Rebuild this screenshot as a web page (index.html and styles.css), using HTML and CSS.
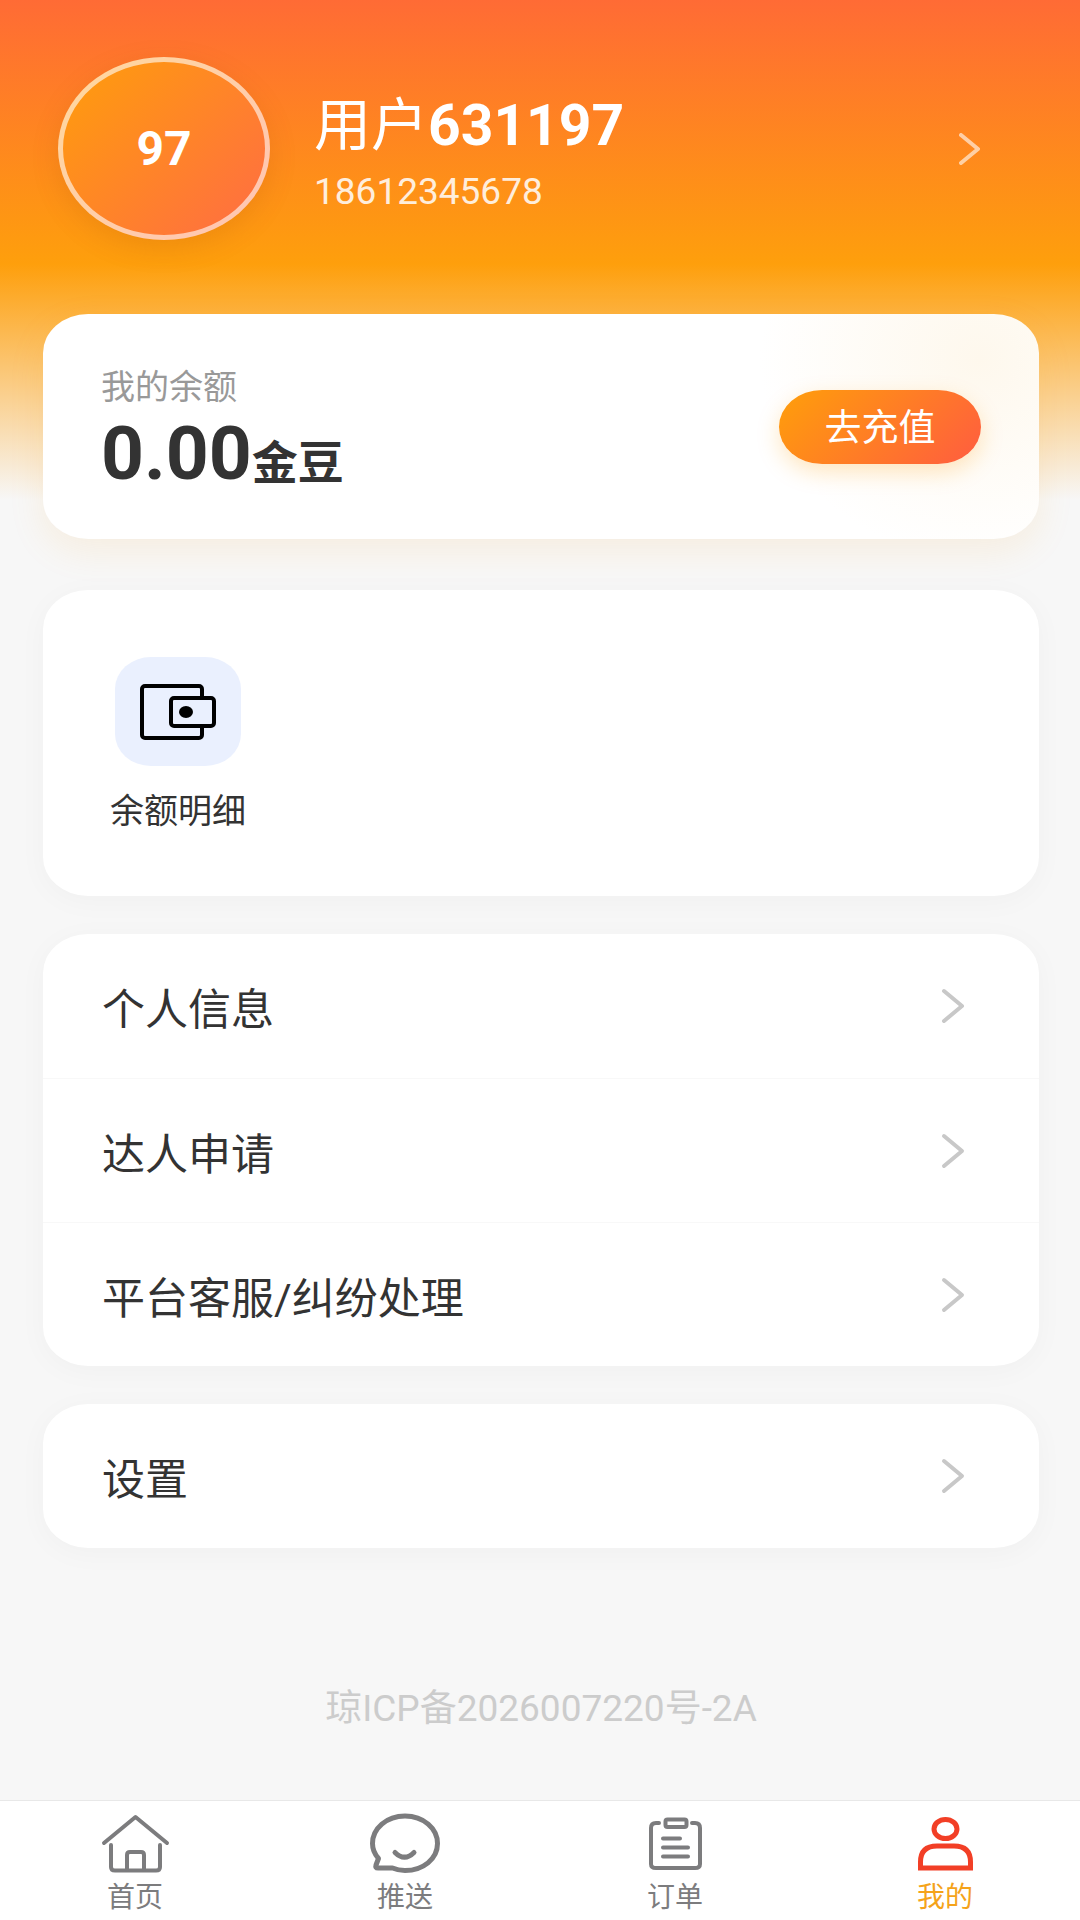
FILE: index.html
```html
<!DOCTYPE html>
<html lang="zh-CN">
<head>
<meta charset="UTF-8">
<meta name="viewport" content="width=device-width, initial-scale=1.0">
<title>我的</title>
<link rel="stylesheet" href="styles.css">
</head>
<body>
<main class="page">
<a class="profile" href="#profile">
<span class="avatar">97</span>
<span class="profile-info">
<span class="profile-name">用户<b>631197</b></span>
<span class="profile-phone">18612345678</span>
</span>
<svg class="profile-arrow" viewBox="0 0 22 32"><path d="M2 2 L19 16 L2 30"/></svg>
</a>
<section class="card balance">
<div class="balance-info">
<div class="balance-label">我的余额</div>
<div class="balance-value">0.00<span class="balance-unit">金豆</span></div>
</div>
<button class="recharge-button" type="button">去充值</button>
</section>
<section class="card shortcuts">
<a class="shortcut" href="#balance">
<span class="shortcut-icon">
<svg viewBox="0 0 76 56">
<rect x="2" y="2" width="60" height="52" rx="3"/>
<rect class="flap" x="31" y="14" width="43" height="28" rx="3"/>
<ellipse class="dot" cx="46" cy="28" rx="7" ry="6"/>
</svg>
</span>
<span class="shortcut-text">余额明细</span>
</a>
</section>
<nav class="card menu">
<a class="menu-item" href="#info">个人信息<svg class="arrow" viewBox="0 0 24 36"><path d="M3 3 L21 18 L3 33"/></svg></a>
<a class="menu-item" href="#apply">达人申请<svg class="arrow" viewBox="0 0 24 36"><path d="M3 3 L21 18 L3 33"/></svg></a>
<a class="menu-item" href="#service">平台客服/纠纷处理<svg class="arrow" viewBox="0 0 24 36"><path d="M3 3 L21 18 L3 33"/></svg></a>
</nav>
<nav class="card menu">
<a class="menu-item" href="#settings">设置<svg class="arrow" viewBox="0 0 24 36"><path d="M3 3 L21 18 L3 33"/></svg></a>
</nav>
<p class="icp">琼ICP备2026007220号-2A</p>
</main>
<nav class="tabbar">
<a class="tab" href="#home">
<svg viewBox="0 0 72 60">
<path d="M5 30 L36.5 4 L68 30"/>
<path d="M12 32 V54 Q12 57.5 16 57.5 H57 Q61 57.5 61 54 V32"/>
<path d="M28 57 V42 Q28 39 31 39 H42 Q45 39 45 42 V57"/>
</svg>
首页
</a>
<a class="tab" href="#push">
<svg class="bold" viewBox="0 0 72 60">
<path d="M9.5 45.5 C5.5 41 3.5 36 3.5 30.5 C3.5 15.5 17.5 3 36 3 C54.5 3 68.5 15.5 68.5 30.5 C68.5 46 54 57.5 36 57.5 C31 57.5 27 56.5 23.5 55 H9 Q6 55 7 52 Z"/>
<path d="M26 39.5 Q35.5 49 45 39.5"/>
</svg>
推送
</a>
<a class="tab" href="#order">
<svg viewBox="0 0 72 60">
<path d="M20 10 H17 Q12 10 12 15 V51 Q12 55 17 55 H56 Q61 55 61 51 V15 Q61 10 56 10 H53"/>
<rect x="26.5" y="6.5" width="21" height="7.5" rx="2"/>
<path d="M24 25.5 H41 M24 34.5 H49 M24 43.5 H49"/>
</svg>
订单
</a>
<a class="tab active" href="#mine">
<svg class="bold" viewBox="0 0 72 60">
<ellipse cx="36.5" cy="16" rx="11.5" ry="9.5"/>
<path class="square" d="M11.5 55 V49 Q11.5 33 28 33 H45 Q61.5 33 61.5 49 V55 Z"/>
</svg>
我的
</a>
</nav>
</body>
</html>
```
FILE: styles.css
```css
* {
    box-sizing: border-box;
}
body {
    font-family: Roboto, 'Noto Sans CJK SC', sans-serif;
    margin: 0;
    min-height: 100vh;
    display: flex;
    flex-direction: column;
    color: #333;
    background: #f7f7f7;
}
a {
    color: inherit;
    text-decoration: none;
}
svg {
    flex-shrink: 0;
    fill: none;
    stroke: currentColor;
    stroke-width: 4;
    stroke-linecap: round;
    stroke-linejoin: round;
}
.page {
    flex: 1;
    padding: 57px 41px 0 43px;
    background: linear-gradient(180deg, #ff6b35 0, #fe9f0c 264px, #f7f7f7 500px);
}
.profile {
    display: flex;
    align-items: center;
    padding: 0 58px 0 15px;
    margin-bottom: 74px;
    color: #fff;
}
.avatar {
    flex-shrink: 0;
    width: 212px;
    height: 183px;
    border: 5px solid rgba(255, 255, 255, 0.6);
    border-radius: 50%;
    background: linear-gradient(135deg, #ff9f0a, #ff6b45) border-box;
    box-shadow: 0 8px 28px rgba(150, 70, 0, 0.15);
    display: flex;
    align-items: center;
    justify-content: center;
    font-size: 48px;
    font-weight: bold;
}
.profile-info {
    flex: 1;
    display: flex;
    flex-direction: column;
    gap: 12px;
    padding-top: 10px;
    margin-left: 44px;
}
.profile-name {
    font-size: 57px;
    line-height: 64px;
}
.profile-phone {
    font-size: 37px;
    line-height: 44px;
    opacity: 0.85;
}
.profile-arrow {
    width: 22px;
    height: 32px;
    opacity: 0.6;
}
.card {
    background: #fff;
    border-radius: 45px / 39px;
    box-shadow: 0 5px 30px rgba(0, 0, 0, 0.03);
    margin-bottom: 38px;
}
.balance {
    display: flex;
    align-items: center;
    justify-content: space-between;
    height: 225px;
    padding: 0 58px;
    margin-bottom: 51px;
    background: radial-gradient(220px 200px at 94% 20%, #fef8ed, #fff) #fff;
    box-shadow: 0 12px 36px rgba(245, 160, 20, 0.1);
}
.balance-info {
    padding-top: 15px;
}
.balance-label {
    font-size: 34px;
    line-height: 48px;
    color: #999;
}
.balance-value {
    font-size: 75px;
    font-weight: bold;
    line-height: 84px;
}
.balance-unit {
    font-size: 46px;
}
.recharge-button {
    width: 202px;
    height: 74px;
    padding: 0 0 4px;
    border: none;
    border-radius: 43px / 37px;
    background: linear-gradient(135deg, #ff9f0a, #ff5c40);
    box-shadow: 0 8px 22px rgba(255, 159, 10, 0.25);
    color: #fff;
    font-family: inherit;
    font-size: 37px;
    cursor: pointer;
}
.shortcuts {
    display: flex;
    height: 306px;
    padding: 67px 67px 0;
}
.shortcut {
    display: flex;
    flex-direction: column;
    align-items: center;
    gap: 21px;
}
.shortcut-icon {
    flex-shrink: 0;
    width: 126px;
    height: 109px;
    border-radius: 36px / 32px;
    background: #eaf0fe;
    display: flex;
    align-items: center;
    justify-content: center;
    color: #000;
}
.shortcut-icon svg {
    width: 76px;
    height: 56px;
}
.shortcut-icon .flap {
    fill: #eaf0fe;
}
.shortcut-icon .dot {
    fill: #000;
    stroke: none;
}
.shortcut-text {
    font-size: 34px;
    line-height: 48px;
}
.menu-item {
    display: flex;
    align-items: center;
    justify-content: space-between;
    height: 144px;
    padding: 0 74px 0 59px;
    font-size: 43px;
}
.menu-item + .menu-item {
    border-top: 1px solid #f8f8f8;
}
.arrow {
    width: 24px;
    height: 36px;
    color: #c8c8c8;
}
.icp {
    margin: 137px 0 67px;
    font-size: 37px;
    line-height: 48px;
    text-align: center;
    color: #ccc;
}
.tabbar {
    display: flex;
    padding: 12px 0 3px;
    border-top: 1px solid #e8e8e8;
    background: #fff;
}
.tab {
    flex: 1;
    display: flex;
    flex-direction: column;
    align-items: center;
    gap: 5px;
    font-size: 28px;
    line-height: 40px;
    color: #7c7c7e;
}
.tab svg {
    width: 72px;
    height: 60px;
}
.tab .bold {
    stroke-width: 5;
}
.tab .square {
    stroke-linejoin: miter;
}
.tab.active {
    color: #f5a31a;
}
.tab.active svg {
    color: #f23f26;
}
```
